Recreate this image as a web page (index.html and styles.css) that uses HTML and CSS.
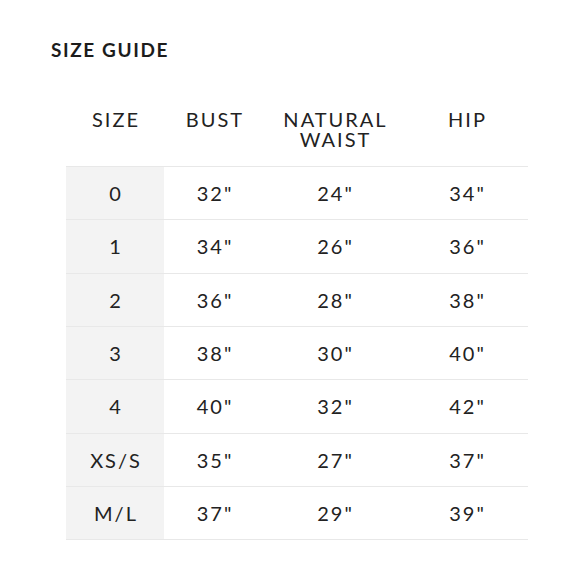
FILE: index.html
```html
<!DOCTYPE html>
<html>
<head>
<meta charset="utf-8">
<link rel="stylesheet" href="styles.css">
</head>
<body>
<div class="page">
  <h1 class="title">SIZE GUIDE</h1>
  <table class="guide">
    <thead>
      <tr>
        <th class="c1">SIZE</th>
        <th class="c2">BUST</th>
        <th class="c3">NATURAL<br>WAIST</th>
        <th class="c4">HIP</th>
      </tr>
    </thead>
    <tbody>
      <tr><td class="size">0</td><td>32"</td><td>24"</td><td>34"</td></tr>
      <tr><td class="size">1</td><td>34"</td><td>26"</td><td>36"</td></tr>
      <tr><td class="size">2</td><td>36"</td><td>28"</td><td>38"</td></tr>
      <tr><td class="size">3</td><td>38"</td><td>30"</td><td>40"</td></tr>
      <tr><td class="size">4</td><td>40"</td><td>32"</td><td>42"</td></tr>
      <tr><td class="size">XS/S</td><td>35"</td><td>27"</td><td>37"</td></tr>
      <tr><td class="size">M/L</td><td>37"</td><td>29"</td><td>39"</td></tr>
    </tbody>
  </table>
</div>
</body>
</html>
```
FILE: styles.css
```css
html, body {
  margin: 0;
  padding: 0;
  background: #ffffff;
}
body {
  font-family: Lato, "Open Sans", sans-serif;
  color: #222222;
}
.page {
  padding: 39px 0 0 51px;
}
.title {
  margin: 0;
  font-size: 19px;
  font-weight: 700;
  line-height: 22px;
  letter-spacing: 1.6px;
  color: #1c1c1c;
}
.guide {
  margin: 39px 0 0 15px;
  width: 462px;
  border-collapse: collapse;
  table-layout: fixed;
}
.guide th {
  font-weight: 400;
  font-size: 20px;
  line-height: 20px;
  letter-spacing: 2px;
  text-align: center;
  vertical-align: top;
  padding: 9px 0 17px 2px;
}
.c1 { width: 96px; }
.c2 { width: 98px; }
.c3 { width: 139px; }
.c4 { width: 121px; }
.guide td {
  height: 52.33px;
  padding: 0 0 0 2px;
  font-size: 20px;
  line-height: 20px;
  letter-spacing: 2px;
  text-align: center;
  vertical-align: middle;
  border-top: 1px solid #e8e8e8;
}
.guide tbody tr:last-child td {
  border-bottom: 1px solid #e8e8e8;
}
.guide td.size {
  background: #f3f3f3;
}
```
